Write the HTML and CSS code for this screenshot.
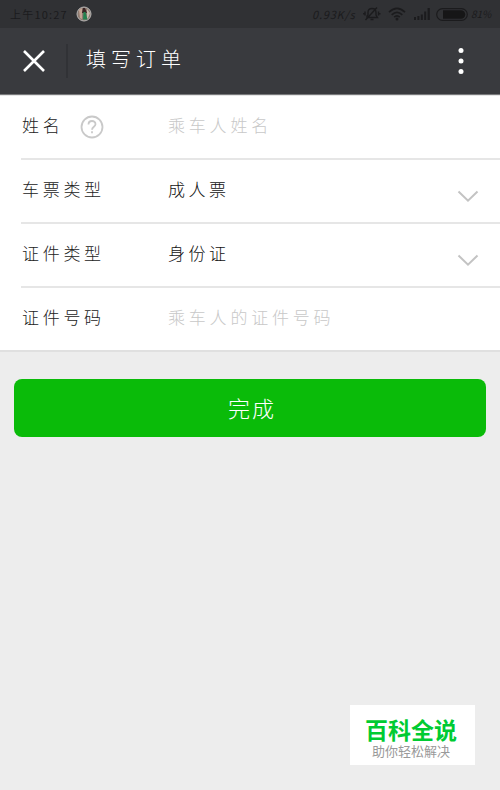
FILE: index.html
```
<!DOCTYPE html>
<html lang="zh-CN">
<head>
  <meta charset="UTF-8" />
  <title>填写订单</title>
  <link rel="stylesheet" href="styles.css">
</head>
<body>

  <div class="status-bar">
    <span class="time">上午10:27</span>
    <svg class="avatar" width="16" height="16" viewBox="0 0 16 16">
      <circle cx="8" cy="8" r="7" fill="#8d7b70" stroke="#b5b5b5" />
      <path d="M3 4l3-2v11l-2-1z" fill="#c4a493" />
      <path d="M11 3l3 4-2 5-1 1z" fill="#c9bcae" />
      <path d="M7 2h2l2 5H6z" fill="#3b2424" />
      <path d="M7.5 6h2l2 7.5H7z" fill="#23814d" />
    </svg>
    <span class="speed">0.93K/s</span>
    <svg class="mute" width="18" height="16" viewBox="0 0 18 16" fill="none" stroke="#1b1b1d" stroke-width="1.4">
      <path d="M4 11.5V10l1-1V6.5C5 4 6.5 2.500 9 2.500S13 4 13 6.500V9l1.500 2.500H4zM7.500 13.500h3M2.500 14L14 1.500" />
      <path d="M2 5.500v4M.8 7v1.500M15.500 5.500v4M16.800 7v1.500" />
    </svg>
    <svg class="wifi" width="18" height="14" viewBox="0 0 18 14" fill="none" stroke="#1b1b1d" stroke-width="1.700">
      <path d="M1 5.200Q9-2.400 17 5.200M3.700 7.800Q9 2.800 14.300 7.800M6.200 10.200Q9 7.500 11.800 10.200" />
      <circle cx="9" cy="12" r="1.500" fill="#1b1b1d" stroke="none" />
    </svg>
    <svg class="signal" width="16" height="12" viewBox="0 0 16 12" fill="#1b1b1d">
      <path d="M0 9h2v3H0zM3.400 8h2v4h-2zM6.800 6.500h2V12h-2zM10.200 3.500h2V12h-2zM13.600 0h2.200v12h-2.200z" />
    </svg>
    <svg class="battery" width="32" height="13" viewBox="0 0 32 13">
      <rect x=".7" y=".7" width="30.600" height="11.600" rx="5.800" fill="none" stroke="#1b1b1d" stroke-width="1.200" />
      <path d="M7 2.200h18a4.300 4.300 0 0 1 0 8.600H7z" fill="#161617" />
    </svg>
    <span class="percent">81%</span>
  </div>

  <div class="header">
    <svg class="close" width="24" height="24" viewBox="0 0 24 24" stroke="#fff" stroke-width="2.600">
      <path d="M2 2l20 20M22 2L2 22" />
    </svg>
    <div class="divider"></div>
    <div class="title">填写订单</div>
    <svg class="more" width="6" height="28" viewBox="0 0 6 28" fill="#fff">
      <circle cx="3" cy="3.500" r="2.500" />
      <circle cx="3" cy="14" r="2.500" />
      <circle cx="3" cy="24.500" r="2.500" />
    </svg>
  </div>

  <div class="form">
    <div class="row">
      <div class="label"><span>姓名</span>
        <svg class="help" width="24" height="24" viewBox="0 0 24 24" fill="none" stroke="#c9c9c9" stroke-width="1.800">
          <circle cx="12" cy="12" r="10.500" />
          <path d="M8.500 9.500C8.500 4.800 15.500 5 15.500 9.200C15.500 11.700 12 11.800 12 14.800M12 16.200v2" />
        </svg>
      </div>
      <div class="value placeholder">乘车人姓名</div>
    </div>
    <div class="row">
      <div class="label">车票类型</div>
      <div class="value">成人票</div>
      <svg class="arrow" width="22" height="13" viewBox="0 0 22 13" fill="none" stroke="#c3c3c3" stroke-width="2">
        <path d="M1.500 1.500L11 10.700L20.500 1.500" />
      </svg>
    </div>
    <div class="row">
      <div class="label">证件类型</div>
      <div class="value">身份证</div>
      <svg class="arrow" width="22" height="13" viewBox="0 0 22 13" fill="none" stroke="#c3c3c3" stroke-width="2">
        <path d="M1.500 1.500L11 10.700L20.500 1.500" />
      </svg>
    </div>
    <div class="row">
      <div class="label">证件号码</div>
      <div class="value placeholder">乘车人的证件号码</div>
    </div>
  </div>

  <button class="submit">完成</button>

  <div class="watermark">
    <div class="brand">百科全说</div>
    <div class="slogan">助你轻松解决</div>
  </div>

</body>
</html>
```
FILE: styles.css
```
* {
  box-sizing: border-box;
}
body {
  margin: 0;
  height: 790px;
  overflow: hidden;
  background: #ededed;
  font-family: "Noto Sans CJK SC", sans-serif;
  font-weight: 300;
}
svg {
  display: block;
  flex: none;
}
.status-bar {
  display: flex;
  align-items: center;
  height: 28px;
  padding: 0 8px 0 10px;
  background: #303134;
  color: #1b1b1d;
  font-size: 11px;
  font-weight: 400;
  line-height: 26px;
  white-space: nowrap;
}
.time {
  width: 66px;
  letter-spacing: 1.2px;
}
.speed {
  width: 50px;
  margin-left: 220px;
  font-style: italic;
  letter-spacing: 0.8px;
}
.mute {
  margin-left: 1px;
}
.wifi {
  margin-left: 7px;
}
.signal {
  margin-left: 8px;
}
.battery {
  margin-left: 6px;
}
.percent {
  margin-left: 3px;
  font-size: 10px;
  font-style: italic;
}
.header {
  display: flex;
  align-items: center;
  height: 67px;
  padding: 0 36px 0 22px;
  background: #393a3e;
  border-bottom: 1px solid #77787a;
}
.divider {
  width: 2px;
  height: 34px;
  margin: 0 17px 0 20px;
  background: #313236;
}
.title {
  flex: 1;
  color: #fff;
  font-size: 20px;
  line-height: 30px;
  letter-spacing: 5px;
  padding-left: 1px;
  margin-bottom: 4px;
}
.form {
  background: #fff;
  border-top: 1px solid #e5e5e5;
  border-bottom: 2px solid #e0e0e0;
}
.row {
  display: flex;
  align-items: center;
  height: 64px;
  margin-left: 21px;
  padding-right: 21px;
  border-bottom: 2px solid #e6e6e6;
}
.row:last-child {
  height: 62px;
  border-bottom: none;
}
.label,
.value {
  color: #222;
  font-size: 17px;
  line-height: 24px;
  letter-spacing: 3.7px;
  padding-bottom: 4px;
}
.label {
  display: flex;
  align-items: center;
  width: 147px;
  padding-left: 1px;
}
.help {
  margin: 2px 0 -2px 17px;
}
.value {
  flex: 1;
  letter-spacing: 3.5px;
  color: #111;
}
.value.placeholder {
  color: #c8c8c8;
  letter-spacing: 3.8px;
}
.arrow {
  margin-top: 10px;
}
.submit {
  display: block;
  width: 472px;
  height: 58px;
  margin: 27px auto 0;
  padding: 0 0 3px 4px;
  border: none;
  border-radius: 8px;
  background: #0abb09;
  color: #fff;
  font-family: inherit;
  font-size: 22px;
  font-weight: 300;
  letter-spacing: 2px;
}
/* floats over the page in the corner */
.watermark {
  position: absolute;
  right: 25px;
  bottom: 25px;
  width: 125px;
  height: 60px;
  padding: 12px 3px 0 0;
  background: #fff;
  text-align: center;
}
.brand {
  color: #00cb32;
  font-size: 23px;
  font-weight: 700;
  line-height: 24px;
}
.slogan {
  color: #999;
  font-size: 13px;
  font-weight: 400;
  line-height: 20px;
}
```
